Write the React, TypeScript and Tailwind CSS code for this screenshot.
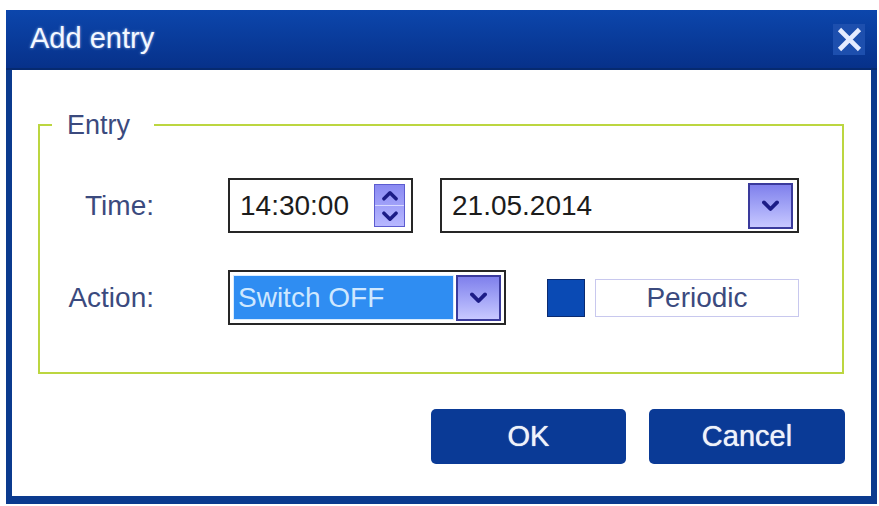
import React from "react";

const font = "font-['Liberation_Sans',Arial,sans-serif]";

function Chevron({ up = false, className = "" }: { up?: boolean; className?: string }) {
    return (
        <svg viewBox="0 0 16 10" className={className}>
            <path
                d={up ? "M2.5 8 L8 2.5 L13.5 8" : "M2.5 2 L8 7.5 L13.5 2"}
                fill="none"
                stroke="#1c1c86"
                strokeWidth="3.2"
                strokeLinecap="round"
                strokeLinejoin="round"
            />
        </svg>
    );
}

function DropButton() {
    return (
        <div className="w-[45px] h-[46px] border-2 border-[#3a3a9c] bg-gradient-to-b from-[#8080ec] to-[#c8c8ff] flex items-center justify-center">
            <Chevron className="w-[19px] h-[12px]"/>
        </div>
    );
}

function SpinButtons() {
    return (
        <div className="w-[31px] h-[43px] flex flex-col border border-[#5c5cd0] bg-gradient-to-b from-[#8a8af2] to-[#b8b8ff]">
            <div className="flex-1 border-b border-[#d8d8ff] flex items-center justify-center">
                <Chevron up className="w-[18px] h-[11px]"/>
            </div>
            <div className="flex-1 flex items-center justify-center">
                <Chevron className="w-[18px] h-[11px]"/>
            </div>
        </div>
    );
}

export default function App() {
    return (
        <div className={`min-h-screen bg-white pt-[10px] pl-[6px] ${font}`}>
            <div className="w-[871px] h-[494px] flex flex-col bg-[#0b3a8e]">
                {/* title bar */}
                <div className="h-[60px] flex items-center justify-between pl-[24px] pr-[12px] bg-gradient-to-b from-[#0c46ac] to-[#07318a] border-b-2 border-[#062a70]">
                    <span className="text-[#f4f8ff] text-[29px] [text-shadow:0_0_3px_rgba(200,220,255,0.7)]">Add entry</span>
                    <div className="w-[32px] h-[31px] bg-[#1d4fae] flex items-center justify-center">
                        <svg viewBox="0 0 24 24" className="w-[25px] h-[25px]">
                            <path d="M4 4 L20 20 M20 4 L4 20" stroke="#e4ebff" strokeWidth="4.5" strokeLinecap="square"/>
                        </svg>
                    </div>
                </div>

                {/* body */}
                <div className="flex-1 mx-[6px] mb-[8px] bg-white flex flex-col">
                    <fieldset className="ml-[26px] mr-[27px] mt-[39px] border-2 border-[#bcd640] px-0 pb-[47px]">
                        <legend className="ml-[12px] pl-[15px] pr-[24px] text-[27px] leading-[32px] text-[#3b4a7e]">Entry</legend>

                        <div className="mt-[37px] flex items-center">
                            <span className="w-[114px] text-right text-[28px] text-[#3b4a7e]">Time:</span>
                            <div className="ml-[74px] w-[185px] h-[55px] border-2 border-[#262626] flex items-center justify-between pl-[10px] pr-[6px]">
                                <span className="text-[28px] text-[#1c1c1c]">14:30:00</span>
                                <SpinButtons/>
                            </div>
                            <div className="ml-[27px] w-[359px] h-[55px] border-2 border-[#262626] flex items-center justify-between pl-[10px] pr-[4px]">
                                <span className="text-[28px] text-[#1c1c1c]">21.05.2014</span>
                                <DropButton/>
                            </div>
                        </div>

                        <div className="mt-[37px] flex items-center">
                            <span className="w-[114px] text-right text-[28px] text-[#3b4a7e]">Action:</span>
                            <div className="ml-[74px] w-[278px] h-[55px] border-2 border-[#262626] p-[3px] flex items-center gap-[2px]">
                                <div className="flex-1 h-full bg-[#2f8df2] border border-[#d8ecff] flex items-center pl-[4px]">
                                    <span className="text-[28px] text-[#cfe8ff]">Switch OFF</span>
                                </div>
                                <DropButton/>
                            </div>
                            <div className="ml-[41px] w-[38px] h-[38px] bg-[#0a4ab4] border border-[#0a2a70]"></div>
                            <div className="ml-[10px] w-[204px] h-[38px] border border-[#c8c8ee] flex items-center justify-center">
                                <span className="text-[28px] text-[#3b4a7e]">Periodic</span>
                            </div>
                        </div>
                    </fieldset>

                    <div className="mt-[35px] mr-[26px] flex justify-end gap-[23px]">
                        <button className="w-[195px] h-[55px] rounded-[5px] bg-[#0a3a96] text-[#eef2fa] text-[29px] [text-shadow:0_0_1px_#ffffff]">OK</button>
                        <button className="w-[196px] h-[55px] rounded-[5px] bg-[#0a3a96] text-[#eef2fa] text-[29px] [text-shadow:0_0_1px_#ffffff]">Cancel</button>
                    </div>
                </div>
            </div>
        </div>
    );
}
